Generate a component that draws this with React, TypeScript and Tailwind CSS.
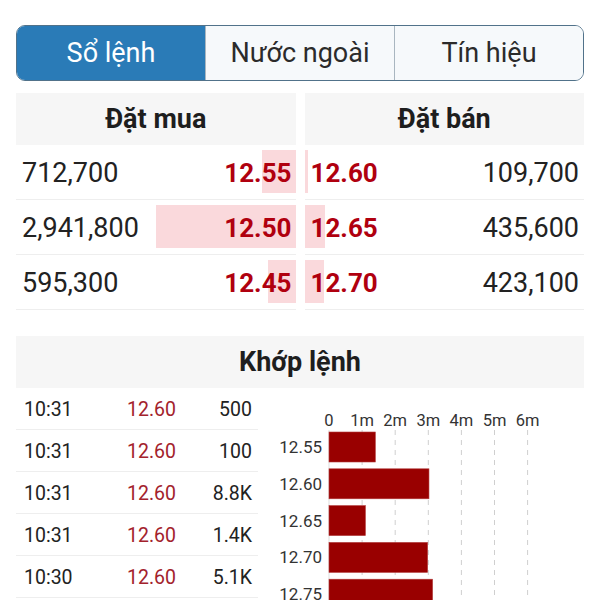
import { useState } from 'react';

const tabs = ['Sổ lệnh', 'Nước ngoài', 'Tín hiệu'];

const bids = [
  { qty: '712,700', price: '12.55', w: 34 },
  { qty: '2,941,800', price: '12.50', w: 140 },
  { qty: '595,300', price: '12.45', w: 28 },
];

const asks = [
  { price: '12.60', qty: '109,700', w: 3 },
  { price: '12.65', qty: '435,600', w: 20 },
  { price: '12.70', qty: '423,100', w: 19 },
];

const trades = [
  { time: '10:31', price: '12.60', vol: '500' },
  { time: '10:31', price: '12.60', vol: '100' },
  { time: '10:31', price: '12.60', vol: '8.8K' },
  { time: '10:31', price: '12.60', vol: '1.4K' },
  { time: '10:30', price: '12.60', vol: '5.1K' },
];

const volumes = [
  { label: '12.55', m: 1.4 },
  { label: '12.60', m: 3.02 },
  { label: '12.65', m: 1.1 },
  { label: '12.70', m: 2.98 },
  { label: '12.75', m: 3.13 },
];

function VolumeChart() {
  const x0 = 59;
  const step = 33.1;
  const ticks = ['0', '1m', '2m', '3m', '4m', '5m', '6m'];
  return (
    <svg width="313" height="212" className="block">
      {ticks.map((t, i) => (
        <g key={t}>
          <text x={x0 + i * step} y={38} textAnchor="middle" fontSize="16.5" fill="#333" fontFamily="Roboto, sans-serif">
            {t}
          </text>
          {i > 0 && (
            <line x1={x0 + i * step} y1={42} x2={x0 + i * step} y2={212} stroke="#cfcfcf" strokeWidth="1" strokeDasharray="5 5" />
          )}
        </g>
      ))}
      <line x1={x0} y1={42} x2={x0} y2={212} stroke="#dddddd" strokeWidth="1" />
      {volumes.map((v, i) => {
        const y = 44 + i * 36.8;
        return (
          <g key={v.label}>
            <text x={52} y={y + 21} textAnchor="end" fontSize="17" fill="#333" fontFamily="Roboto, sans-serif">
              {v.label}
            </text>
            <rect x={x0} y={y} width={v.m * step} height={30} fill="#990000" stroke="#b23a3a" strokeWidth="0.6" />
          </g>
        );
      })}
    </svg>
  );
}

export default function App() {
  const [active, setActive] = useState(0);

  return (
    <div className="w-[600px] h-[600px] overflow-hidden bg-white px-4 pt-[25px] font-['Roboto',sans-serif]">
      <div className="flex h-[56px] rounded-[9px] border-[1.5px] border-[#51728a] overflow-hidden">
        {tabs.map((t, i) => (
          <button
            key={t}
            type="button"
            onClick={() => setActive(i)}
            className={
              i === active
                ? 'flex-1 flex items-center justify-center text-[27px] text-white bg-[#2a7bb7]'
                : 'flex-1 flex items-center justify-center text-[27px] text-[#2b2b2b] bg-[#f6f9fb] border-l border-[#a9b6c0]'
            }
          >
            {t}
          </button>
        ))}
      </div>

      <div className="grid grid-cols-2 gap-x-[9px] mt-[12px]">
        <div>
          <div className="h-[52px] bg-[#f6f6f6] flex items-center justify-center text-[27px] font-bold text-[#1e1e1e]">Đặt mua</div>
          {bids.map((b) => (
            <div key={b.price} className="relative h-[55px] border-b border-[#eeeeee] flex items-center justify-between pt-[3px] pl-[6px] pr-[4px]">
              <div className="absolute right-0 top-[5px] h-[43px] bg-[#fad9dc]" style={{ width: b.w }} />
              <span className="relative text-[27px] text-[#222]">{b.qty}</span>
              <span className="relative text-[26px] font-bold text-[#b0000f]">{b.price}</span>
            </div>
          ))}
        </div>
        <div>
          <div className="h-[52px] bg-[#f6f6f6] flex items-center justify-center text-[27px] font-bold text-[#1e1e1e]">Đặt bán</div>
          {asks.map((a) => (
            <div key={a.price} className="relative h-[55px] border-b border-[#eeeeee] flex items-center justify-between pt-[3px] pl-[6px] pr-[5px]">
              <div className="absolute left-0 top-[5px] h-[43px] bg-[#fad9dc]" style={{ width: a.w }} />
              <span className="relative text-[26px] font-bold text-[#b0000f]">{a.price}</span>
              <span className="relative text-[27px] text-[#222]">{a.qty}</span>
            </div>
          ))}
        </div>
      </div>

      <div className="mt-[26px] h-[52px] bg-[#f6f6f6] flex items-center justify-center text-[27px] font-bold text-[#1e1e1e]">
        Khớp lệnh
      </div>

      <div className="flex gap-[12px]">
        <div className="w-[242px]">
          {trades.map((t, i) => (
            <div key={i} className="h-[42px] border-b border-[#eeeeee] flex items-center pt-[3px] text-[19.5px]">
              <span className="w-[111px] pl-[8px] text-[#222]">{t.time}</span>
              <span className="flex-1 text-[#a3222c]">{t.price}</span>
              <span className="pr-[6px] text-[#222]">{t.vol}</span>
            </div>
          ))}
        </div>
        <VolumeChart />
      </div>
    </div>
  );
}
